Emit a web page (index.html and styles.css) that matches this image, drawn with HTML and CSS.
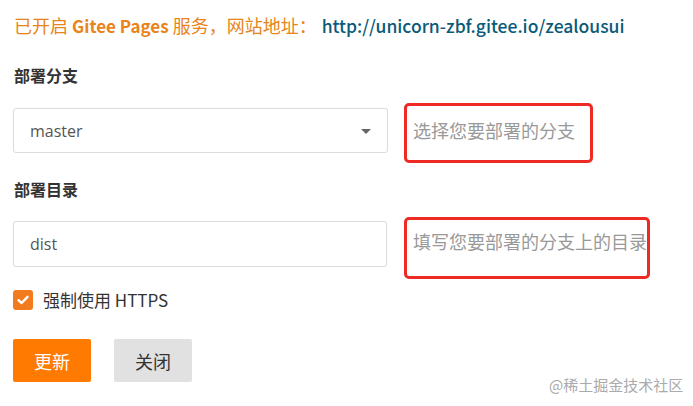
FILE: index.html
```html
<!DOCTYPE html>
<html lang="zh-CN">
<head>
<meta charset="utf-8">
<link rel="stylesheet" href="styles.css">
</head>
<body>
<div class="page">
  <p class="status">已开启 <b>Gitee Pages</b> 服务，网站地址：<a class="site" href="#">http://unicorn-zbf.gitee.io/zealousui</a></p>

  <div class="label">部署分支</div>
  <div class="row">
    <div class="field select">
      <span>master</span>
      <span class="caret"></span>
    </div>
    <div class="note note-1">选择您要部署的分支</div>
  </div>

  <div class="label">部署目录</div>
  <div class="row row-2">
    <div class="field field-2"><span>dist</span></div>
    <div class="note note-2">填写您要部署的分支上的目录</div>
  </div>

  <label class="check">
    <span class="box">
      <svg width="14" height="14" viewBox="0 0 14 14"><path d="M2.5 7.2 L5.6 10 L11.5 3.8" fill="none" stroke="#fff" stroke-width="2.4" stroke-linecap="round" stroke-linejoin="round"/></svg>
    </span>
    <span class="check-text">强制使用 HTTPS</span>
  </label>

  <div class="actions">
    <button class="btn primary">更新</button>
    <button class="btn">关闭</button>
  </div>
</div>
<div class="watermark">@稀土掘金技术社区</div>
</body>
</html>
```

FILE: styles.css
```css
html, body {
  margin: 0;
  padding: 0;
  background: #fff;
}
body {
  width: 693px;
  height: 406px;
  position: relative;
  overflow: hidden;
  font-family: "Noto Sans CJK SC", "Noto Sans", sans-serif;
  color: #333;
}
.page {
  padding: 11px 0 0 13px;
}
.status {
  margin: 0;
  font-size: 18px;
  line-height: 28px;
  height: 28px;
  color: #e8841a;
  padding-left: 1px;
  white-space: nowrap;
}
.status b {
  font-weight: 700;
  font-size: 17px;
}
.site {
  color: #0a5a78;
  text-decoration: none;
  font-weight: 500;
  font-size: 17.5px;
  margin-left: 5px;
}
.label {
  margin-top: 25px;
  font-size: 16px;
  font-weight: 700;
  line-height: 22px;
  height: 22px;
  color: #333;
  padding-left: 1px;
}
.row {
  display: grid;
  grid-template-columns: 375px auto;
  column-gap: 16px;
  align-items: start;
  margin-top: 22px;
}
.row + .label {
  margin-top: 25px;
}
.row-2 {
  margin-top: 21px;
}
.field {
  box-sizing: border-box;
  height: 45px;
  border: 1px solid #dcdcdc;
  border-radius: 3px;
  display: flex;
  align-items: center;
  padding: 0 16px;
  font-size: 16px;
  color: #555;
  font-family: "Open Sans", "Noto Sans CJK SC", sans-serif;
}
.field-2 {
  height: 46px;
  margin-right: 1px;
}
.select {
  justify-content: space-between;
}
.caret {
  width: 0;
  height: 0;
  border-left: 5px solid transparent;
  border-right: 5px solid transparent;
  border-top: 5px solid #666;
  margin-top: 2px;
}
.note {
  box-sizing: border-box;
  justify-self: start;
  border: 3px solid #ee2a24;
  border-radius: 5px;
  color: #999;
  font-size: 18px;
  line-height: 24px;
  padding-left: 6px;
  display: flex;
  align-items: center;
  white-space: nowrap;
}
.note-1 {
  width: 189px;
  height: 60px;
  margin: -5px 0 -10px;
  padding-bottom: 6px;
}
.note-2 {
  width: 246px;
  height: 62px;
  margin: -4px 0 -12px;
  padding-bottom: 14px;
}
.check {
  display: flex;
  align-items: center;
  gap: 10px;
  margin-top: 21px;
  height: 24px;
  font-size: 17px;
  color: #333;
}
.box {
  width: 20px;
  height: 20px;
  border-radius: 3px;
  background: #f27c1d;
  display: flex;
  align-items: center;
  justify-content: center;
}
.check-text {
  line-height: 24px;
}
.actions {
  display: flex;
  gap: 23px;
  margin-top: 27px;
}
.btn {
  width: 78px;
  height: 43px;
  border: none;
  border-radius: 2px;
  font-family: "Noto Sans CJK SC", sans-serif;
  font-size: 18px;
  background: #e1e1e1;
  color: #333;
  padding: 0;
}
.btn.primary {
  background: #ff7a00;
  color: #fff;
}
.watermark {
  position: absolute;
  left: 549px;
  top: 375px;
  font-size: 15px;
  color: #aaa;
  line-height: 20px;
}
```
